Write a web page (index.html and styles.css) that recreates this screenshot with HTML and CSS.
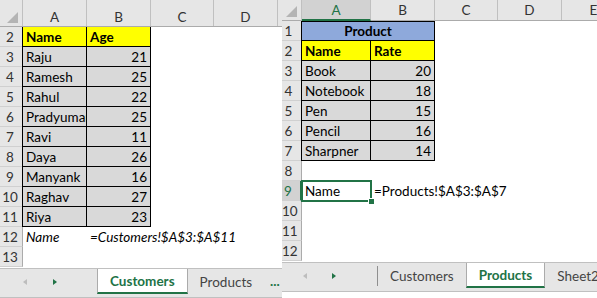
FILE: index.html
```html
<!DOCTYPE html>
<html lang="en">
<head>
  <meta charset="UTF-8">
  <meta name="viewport" content="width=device-width, initial-scale=1.0">
  <title>Named ranges - Customers / Products</title>
  <link rel="stylesheet" href="styles.css">
</head>
<body>

  <div class="screen">

    <!-- Hoja Customers -->
    <div class="sheet sheet-left">
      <div class="colhead">
        <div class="corner"><svg width="11" height="11" viewBox="0 0 11 11"><polygon points="11,0 11,11 0,11" fill="#b4b4b4"/></svg></div>
        <div class="ch c-a">A</div>
        <div class="ch c-b">B</div>
        <div class="ch c-c">C</div>
        <div class="ch c-d">D</div>
        <div class="ch c-e"></div>
      </div>
      <div class="row"><div class="rh">2</div><div class="cell c-a t y">Name</div><div class="cell c-b t y">Age</div></div>
      <div class="row"><div class="rh">3</div><div class="cell c-a t">Raju</div><div class="cell c-b t num">21</div></div>
      <div class="row"><div class="rh">4</div><div class="cell c-a t">Ramesh</div><div class="cell c-b t num">25</div></div>
      <div class="row"><div class="rh">5</div><div class="cell c-a t">Rahul</div><div class="cell c-b t num">22</div></div>
      <div class="row"><div class="rh">6</div><div class="cell c-a t">Pradyuman</div><div class="cell c-b t num">25</div></div>
      <div class="row"><div class="rh">7</div><div class="cell c-a t">Ravi</div><div class="cell c-b t num">11</div></div>
      <div class="row"><div class="rh">8</div><div class="cell c-a t">Daya</div><div class="cell c-b t num">26</div></div>
      <div class="row"><div class="rh">9</div><div class="cell c-a t">Manyank</div><div class="cell c-b t num">16</div></div>
      <div class="row"><div class="rh">10</div><div class="cell c-a t">Raghav</div><div class="cell c-b t num">27</div></div>
      <div class="row"><div class="rh">11</div><div class="cell c-a t">Riya</div><div class="cell c-b t num">23</div></div>
      <div class="row"><div class="rh">12</div><div class="cell c-a it">Name</div><div class="cell c-b it">=Customers!$A$3:$A$11</div></div>
      <div class="row"><div class="rh">13</div></div>

      <div class="tabbar">
        <div class="nav"><span class="arrow-l"></span><span class="arrow-r"></span></div>
        <div class="tab active">Customers</div>
        <div class="tab">Products</div>
        <div class="more">...</div>
      </div>
    </div>

    <!-- Hoja Products -->
    <div class="sheet sheet-right">
      <div class="colhead">
        <div class="corner"><svg width="11" height="11" viewBox="0 0 11 11"><polygon points="11,0 11,11 0,11" fill="#b4b4b4"/></svg></div>
        <div class="ch c-a on">A</div>
        <div class="ch c-b">B</div>
        <div class="ch c-c">C</div>
        <div class="ch c-d">D</div>
        <div class="ch c-e">E</div>
      </div>
      <div class="row"><div class="rh">1</div><div class="cell c-ab t b title">Product</div></div>
      <div class="row"><div class="rh">2</div><div class="cell c-a t y">Name</div><div class="cell c-b t y">Rate</div></div>
      <div class="row"><div class="rh">3</div><div class="cell c-a t">Book</div><div class="cell c-b t num">20</div></div>
      <div class="row"><div class="rh">4</div><div class="cell c-a t">Notebook</div><div class="cell c-b t num">18</div></div>
      <div class="row"><div class="rh">5</div><div class="cell c-a t">Pen</div><div class="cell c-b t num">15</div></div>
      <div class="row"><div class="rh">6</div><div class="cell c-a t">Pencil</div><div class="cell c-b t num">16</div></div>
      <div class="row"><div class="rh">7</div><div class="cell c-a t">Sharpner</div><div class="cell c-b t num">14</div></div>
      <div class="row"><div class="rh">8</div></div>
      <div class="row"><div class="rh on">9</div><div class="cell c-a sel">Name</div><div class="cell c-b">=Products!$A$3:$A$7</div></div>
      <div class="row"><div class="rh">10</div></div>
      <div class="row"><div class="rh">11</div></div>
      <div class="row"><div class="rh">12</div></div>

      <div class="tabbar">
        <div class="nav"><span class="arrow-l"></span><span class="arrow-r"></span><span class="sep"></span></div>
        <div class="tab">Customers</div>
        <div class="tab active">Products</div>
        <div class="tab">Sheet2</div>
      </div>
    </div>

  </div>

</body>
</html>
```

FILE: styles.css
```css
body {
  margin: 0;
  font-family: Lato, "Liberation Sans", sans-serif;
  font-size: 13.5px;
  color: #000;
  background-color: #fff;
}
.screen {
  display: flex;
  width: 597px;
  height: 298px;
  overflow: hidden;
}
.sheet {
  display: flex;
  flex-direction: column;
  overflow: hidden;
  flex-shrink: 0;
}
.sheet-left {
  width: 282px;
}
.sheet-right {
  width: 315px;
}

/* cabecera de columnas */
.colhead {
  display: flex;
  flex-shrink: 0;
  box-sizing: border-box;
  background-color: #e6e6e6;
  border-bottom: 1px solid #ababab;
}
.sheet-left .colhead {
  height: 27px;
}
.sheet-right .colhead {
  height: 21px;
}
.corner {
  display: flex;
  align-items: flex-end;
  justify-content: flex-end;
  box-sizing: border-box;
  padding: 0 4px 3px 0;
  border-right: 1px solid #c0c0c0;
  flex-shrink: 0;
}
.ch {
  display: flex;
  align-items: center;
  justify-content: center;
  box-sizing: border-box;
  border-right: 1px solid #c0c0c0;
  color: #333;
  flex-shrink: 0;
}
.sheet-left .ch {
  padding-top: 7px;
}
.ch.on {
  background-color: #d2d2d2;
  color: #217346;
  border-bottom: 2px solid #217346;
  margin-bottom: -1px;
}

/* anchos de columna */
.sheet-left .corner, .sheet-left .rh { width: 23px; }
.sheet-left .c-a { width: 64px; }
.sheet-left .c-b { width: 64px; }
.sheet-left .c-c { width: 63px; }
.sheet-left .c-d { width: 64px; }
.sheet-left .c-e { width: 4px; border-right: 0; }

.sheet-right .corner, .sheet-right .rh { width: 20px; }
.sheet-right .c-a { width: 69px; }
.sheet-right .c-b { width: 64px; }
.sheet-right .c-ab { width: 133px; }
.sheet-right .c-c { width: 63px; }
.sheet-right .c-d { width: 64px; }
.sheet-right .c-e { width: 64px; }

/* filas */
.row {
  display: flex;
  height: 20px;
  flex-shrink: 0;
}
.rh {
  flex-shrink: 0;
  box-sizing: border-box;
  background-color: #e6e6e6;
  border-right: 1px solid #ababab;
  border-bottom: 1px solid #d0d0d0;
  color: #333;
  text-align: center;
  line-height: 20px;
}
.sheet-left .rh {
  padding-right: 2px;
}
.sheet-right .rh {
  padding-right: 6px;
}
.rh.on {
  background-color: #d2d2d2;
  color: #217346;
  border-right: 2px solid #217346;
}
.cell {
  flex-shrink: 0;
  box-sizing: border-box;
  height: 20px;
  line-height: 20px;
  padding: 0 3px;
  white-space: nowrap;
}
.t {
  background-color: #d9d9d9;
  border-right: 1px solid #000;
  border-bottom: 1px solid #000;
  overflow: hidden;
}
.t.c-a, .t.c-ab {
  border-left: 1px solid #000;
}
.sheet-left .t.c-a {
  width: 65px;
  margin-left: -1px;
}
.sheet-right .t.c-a, .sheet-right .t.c-ab {
  margin-left: -1px;
}
.sheet-right .t.c-a { width: 70px; }
.sheet-right .t.c-ab { width: 134px; }
.t.y {
  background-color: #ffff00;
  font-weight: bold;
}
.title {
  background-color: #8ea9db;
  font-weight: bold;
  text-align: center;
  border-top: 1px solid #000;
  line-height: 18px;
}
.num {
  text-align: right;
}
.it {
  font-style: italic;
}

/* celda seleccionada */
.sel {
  position: relative;
}
.sel::before {
  content: "";
  position: absolute;
  left: -1px;
  top: -1px;
  right: -1px;
  bottom: -1px;
  border: 2px solid #217346;
}
.sel::after {
  content: "";
  position: absolute;
  right: -3px;
  bottom: -3px;
  width: 5px;
  height: 5px;
  background-color: #217346;
  border: 1px solid #fff;
  box-sizing: content-box;
  margin: 0 -1px -1px 0;
}

/* pestañas de hojas */
.tabbar {
  display: flex;
  align-items: flex-start;
  flex-shrink: 0;
  margin-top: 1px;
  height: 30px;
  box-sizing: border-box;
  padding-bottom: 3px;
  background-color: #e6e6e6;
  border-top: 1px solid #c0c0c0;
  border-bottom: 1px solid #c0c0c0;
}
.nav {
  display: flex;
  align-items: center;
  height: 25px;
  box-sizing: border-box;
  flex-shrink: 0;
}
.sheet-left .nav {
  width: 97px;
  padding-left: 23px;
}
.sheet-right .nav {
  width: 96px;
  padding-left: 21px;
}
.arrow-l {
  width: 0;
  height: 0;
  border-top: 3.5px solid transparent;
  border-bottom: 3.5px solid transparent;
  border-right: 4px solid #bdbdbd;
}
.arrow-r {
  width: 0;
  height: 0;
  margin-left: 26px;
  border-top: 3.5px solid transparent;
  border-bottom: 3.5px solid transparent;
  border-left: 4px solid #217346;
}
.sheet-right .arrow-r {
  margin-left: 25px;
}
.sep {
  margin-left: auto;
  width: 1px;
  height: 20px;
  background-color: #8f8f8f;
}
.tab {
  display: flex;
  align-items: center;
  flex-shrink: 0;
  height: 25px;
  box-sizing: border-box;
  padding: 0 12px;
  color: #444;
  white-space: nowrap;
}
.tab.active {
  background-color: #fff;
  color: #217346;
  font-weight: bold;
  border-left: 1px solid #ababab;
  border-right: 1px solid #ababab;
  border-bottom: 2px solid #217346;
  padding: 0 12px;
}
.more {
  margin-left: 6px;
  height: 25px;
  line-height: 25px;
  color: #217346;
  font-weight: bold;
}
```
